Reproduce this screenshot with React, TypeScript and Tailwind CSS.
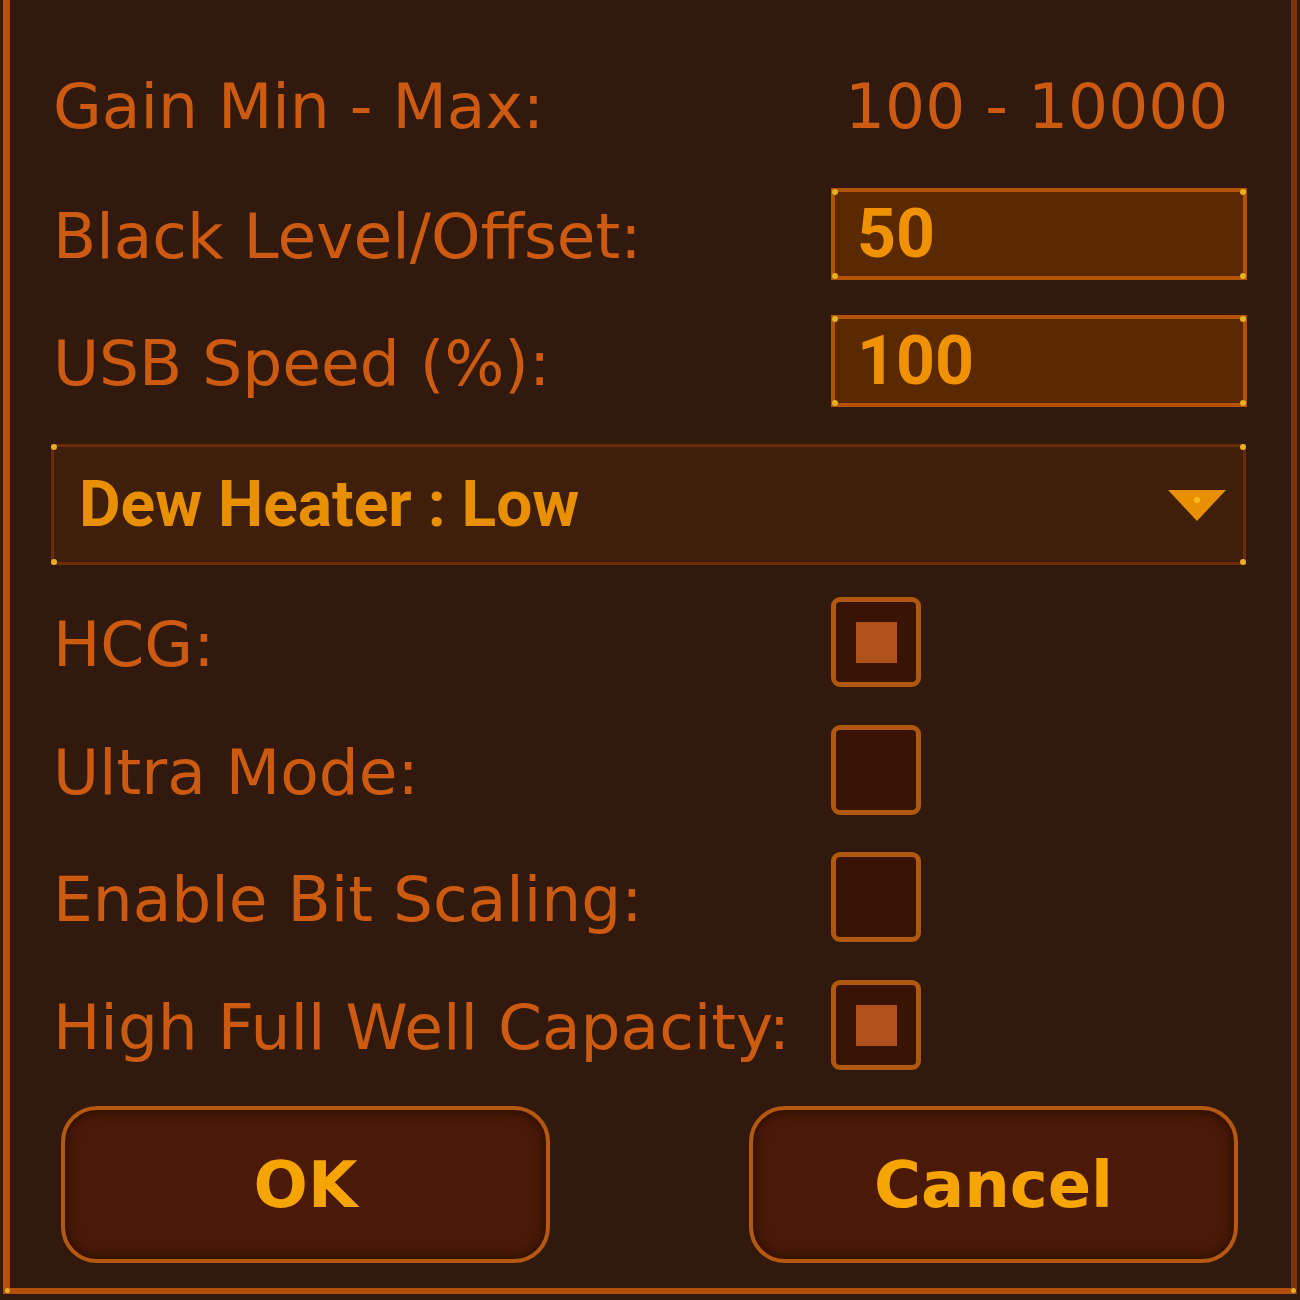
const LABEL = "font-['DejaVu_Sans',sans-serif] text-[63px] leading-none text-[#cc5a10]";

function Dots() {
  return (
    <>
      <span className="absolute -left-[3px] -top-[3px] h-[6px] w-[6px] rounded-full bg-[#e6b020]" />
      <span className="absolute -right-[3px] -top-[3px] h-[6px] w-[6px] rounded-full bg-[#e6b020]" />
      <span className="absolute -left-[3px] -bottom-[3px] h-[6px] w-[6px] rounded-full bg-[#e6b020]" />
      <span className="absolute -right-[3px] -bottom-[3px] h-[6px] w-[6px] rounded-full bg-[#e6b020]" />
    </>
  );
}

function NumberField({ value }: { value: string }) {
  return (
    <div className="relative flex h-[92px] w-[416px] items-center border-[4px] border-[#b35200] bg-[#5b2900] pl-[22px]">
      <span className="font-['Roboto',sans-serif] text-[68px] font-bold leading-none text-[#f09200]">{value}</span>
      <Dots />
    </div>
  );
}

function Check({ checked }: { checked: boolean }) {
  return (
    <div className="flex h-[90px] w-[90px] items-center justify-center rounded-[9px] border-[5px] border-[#b0580f] bg-[#391405]">
      {checked && <div className="h-[41px] w-[41px] bg-[#b0501b]" />}
    </div>
  );
}

const CHECKS = [
  { label: "HCG:", checked: true, mt: "mt-[32px]" },
  { label: "Ultra Mode:", checked: false, mt: "mt-[38px]" },
  { label: "Enable Bit Scaling:", checked: false, mt: "mt-[37px]" },
  { label: "High Full Well Capacity:", checked: true, mt: "mt-[38px]" },
];

export default function App() {
  return (
    <div className="h-[1300px] w-[1300px] bg-[#311a0d] pl-[3px]">
      <div className="relative h-[1294px] w-[1294px] border-b-[6px] border-l-[7px] border-r-[6px] border-b-[#b4500c] border-l-[#b4500c] border-r-[#7a3608]">
        <span className="absolute -bottom-[5px] -left-[5px] h-[5px] w-[5px] rounded-full bg-[#e6b020]" />
        <span className="absolute -bottom-[5px] -right-[5px] h-[5px] w-[5px] rounded-full bg-[#e6b020]" />

        <div className="flex flex-col pl-[43px] pr-[41px] pt-[60px]">
          {/* Gain */}
          <div className="flex h-[92px] items-center">
            <div className={`w-[778px] ${LABEL}`}>Gain Min - Max:</div>
            <div className={`pl-[14px] ${LABEL}`}>100 - 10000</div>
          </div>

          <div className="mt-[36px] flex items-center">
            <div className={`w-[778px] pt-[4px] ${LABEL}`}>Black Level/Offset:</div>
            <NumberField value="50" />
          </div>

          <div className="mt-[35px] flex items-center">
            <div className={`w-[778px] pt-[4px] ${LABEL}`}>USB Speed (%):</div>
            <NumberField value="100" />
          </div>

          {/* Dew heater dropdown */}
          <div className="relative -ml-[2px] mr-[4px] mt-[37px] flex h-[121px] items-center justify-between border-[3px] border-[#6b2c0a] bg-[#3f1f0c] pl-[25px] pr-[16px]">
            <span className="font-['Roboto',sans-serif] text-[64px] font-bold leading-none text-[#e89000]">
              Dew Heater : Low
            </span>
            <svg width="60" height="34" viewBox="0 0 60 34">
              <path d="M1 2 H59 L30 33 Z" fill="#e89000" />
              <circle cx="30" cy="12" r="3" fill="#f5b820" />
            </svg>
            <Dots />
          </div>

          {CHECKS.map((c) => (
            <div key={c.label} className={`${c.mt} flex items-center`}>
              <div className={`w-[778px] whitespace-nowrap pt-[4px] ${LABEL}`}>{c.label}</div>
              <Check checked={c.checked} />
            </div>
          ))}

          {/* Buttons */}
          <div className="ml-[8px] mr-[12px] mt-[36px] flex justify-between">
            {["OK", "Cancel"].map((t) => (
              <button
                key={t}
                className="flex h-[157px] w-[489px] items-center justify-center rounded-[36px] border-[4px] border-[#b4590f] bg-[#4a1a07] shadow-[inset_0_0_14px_#240b02]"
              >
                <span className="font-['DejaVu_Sans',sans-serif] text-[64px] font-bold leading-none text-[#f6a400]">{t}</span>
              </button>
            ))}
          </div>
        </div>
      </div>
    </div>
  );
}
